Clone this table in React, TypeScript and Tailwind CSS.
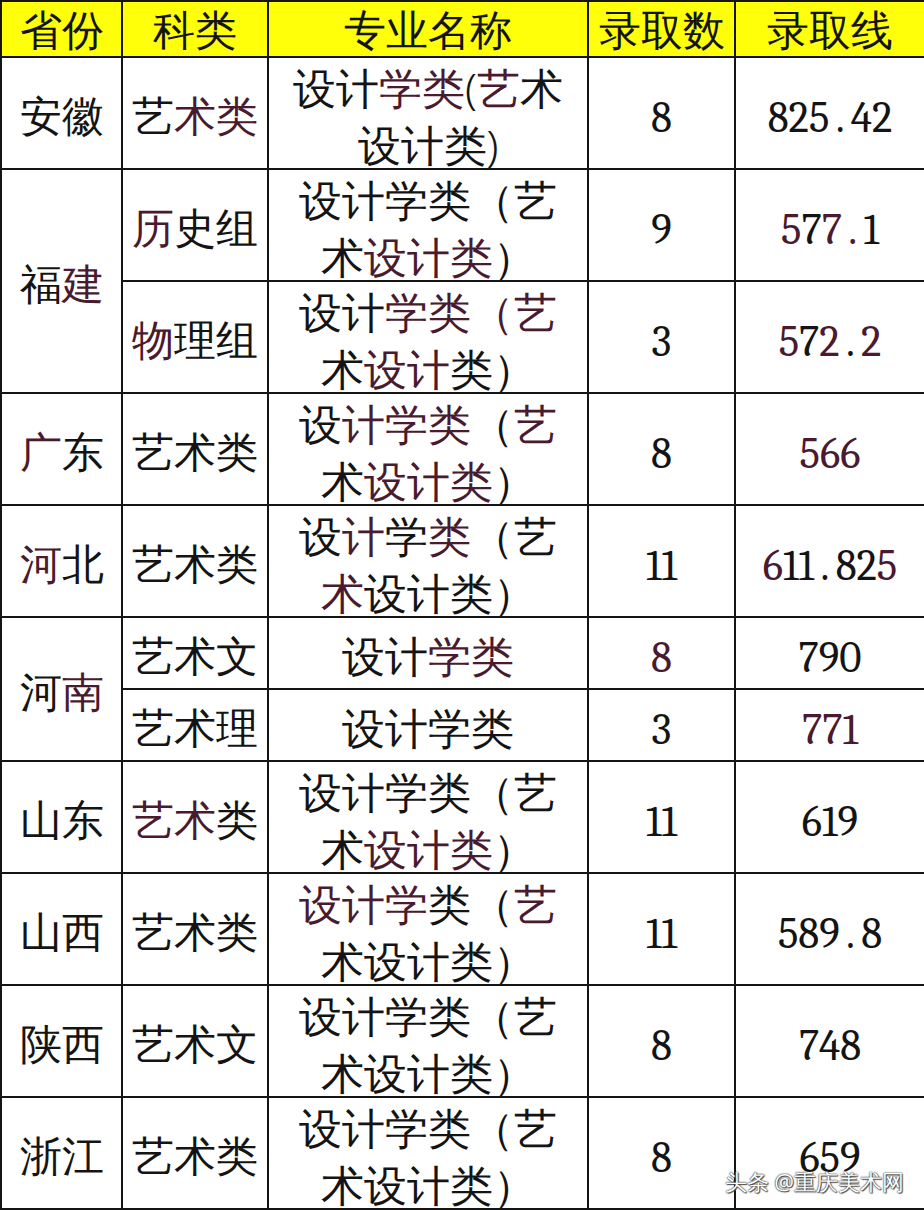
import React from 'react';

// 表格数据：{} 内的字带一点暗红色（原图里的色边）
type Row = {
  prov?: string;
  span?: boolean;
  kind: string;
  major: string[];
  count: string;
  line: string;
};

const rows: Row[] = [
  { prov: '安徽', kind: '艺{术类}', major: ['设计{学类}({艺}术', '设计类)'], count: '8', line: '825.42' },
  { prov: '福{建}', span: true, kind: '{历}史组', major: ['设计学类（艺', '术{设计类}）'], count: '9', line: '{5}7{7.}1' },
  { kind: '{物}理组', major: ['设计{学类（艺}', '术{设计}类）'], count: '3', line: '{5}7{2}.{2}' },
  { prov: '{广}东', kind: '艺术类', major: ['设{计学类}（{艺}', '术{设计类}）'], count: '8', line: '{566}' },
  { prov: '{河}北', kind: '艺术类', major: ['设{计}学{类}（艺', '{术}设计类）'], count: '11', line: '{6}11.82{5}' },
  { prov: '河{南}', span: true, kind: '艺术文', major: ['设计{学类}'], count: '{8}', line: '790' },
  { kind: '艺术理', major: ['设计学类'], count: '3', line: '{771}' },
  { prov: '山东', kind: '{艺术}类', major: ['设计学类（艺', '术{设计类}）'], count: '11', line: '619' },
  { prov: '山西', kind: '艺术类', major: ['{设计学}类（{艺}', '术设计类）'], count: '11', line: '589.8' },
  { prov: '陕西', kind: '艺术文', major: ['设计学类（艺', '术设计类）'], count: '8', line: '748' },
  { prov: '浙江', kind: '艺术类', major: ['设计学类（艺', '术设计类）'], count: '8', line: '659' },
];

// "{..}" -> 暗红色 span
function Tinted({ text, num }: { text: string; num?: boolean }) {
  const parts: { s: string; red: boolean }[] = [];
  let red = false;
  let buf = '';
  for (const ch of text) {
    if (ch === '{' || ch === '}') {
      if (buf) parts.push({ s: buf, red });
      buf = '';
      red = ch === '{';
    } else buf += ch;
  }
  if (buf) parts.push({ s: buf, red });

  return (
    <>
      {parts.map((p, i) => (
        <span key={i} className={p.red ? 'text-[#4a1a2e]' : 'text-[#141414]'}>
          {num
            ? [...p.s].map((c, j) =>
                c === '.' ? (
                  <span key={j} className="inline-block w-[0.5em] text-center">.</span>
                ) : (
                  <span key={j}>{c}</span>
                )
              )
            : p.s}
        </span>
      ))}
    </>
  );
}

function Cell({ children, className = '' }: { children: React.ReactNode; className?: string }) {
  return (
    <div className={`bg-white flex items-center justify-center text-center whitespace-nowrap ${className}`}>
      {children}
    </div>
  );
}

// 数字列用衬线体
function NumCell({ text }: { text: string }) {
  return (
    <Cell className="text-[43px] leading-none pt-[10px] font-serif">
      <Tinted text={text} num />
    </Cell>
  );
}

export default function App() {
  return (
    <div className="relative w-[924px] h-[1210px] bg-white overflow-hidden">
      <div className="grid grid-cols-[119px_144px_318px_145px_188px] grid-rows-[54px_110px_110px_110px_110px_110px_70px_70px_110px_110px_110px_110px] gap-[2px] bg-[#141414] pt-[2px] pl-[2px] pb-[2px]">
        {['省份', '科类', '专业名称', '录取数', '录取线'].map((h) => (
          <div
            key={h}
            className="bg-[#ffff0a] flex items-center justify-center text-[42px] leading-[54px] text-[#141414] font-sans font-light"
          >
            {h}
          </div>
        ))}

        {rows.map((r, i) => (
          <React.Fragment key={i}>
            {r.prov && (
              <Cell className={`${r.span ? 'row-span-2' : ''} text-[42px] leading-none pt-[4px] font-sans font-light`}>
                <Tinted text={r.prov} />
              </Cell>
            )}
            <Cell className="text-[42px] leading-none pt-[4px] font-sans font-light">
              <Tinted text={r.kind} />
            </Cell>
            <Cell className={`text-[43px] ${r.major.length > 1 ? 'leading-[57px] pt-[6px]' : 'leading-none pt-[4px]'} font-sans font-light`}>
              <div className="flex flex-col items-center">
                {r.major.map((l, j) => (
                  <div key={j}>
                    <Tinted text={l} />
                  </div>
                ))}
              </div>
            </Cell>
            <NumCell text={r.count} />
            <NumCell text={r.line} />
          </React.Fragment>
        ))}
      </div>

      {/* 水印 */}
      <div className="absolute right-[20px] bottom-[18px] text-[22px] leading-none text-white font-sans [text-shadow:0_0_2px_#333,0_0_1px_#333,1px_1px_1px_#555]">
        头条 @重庆美术网
      </div>
    </div>
  );
}
